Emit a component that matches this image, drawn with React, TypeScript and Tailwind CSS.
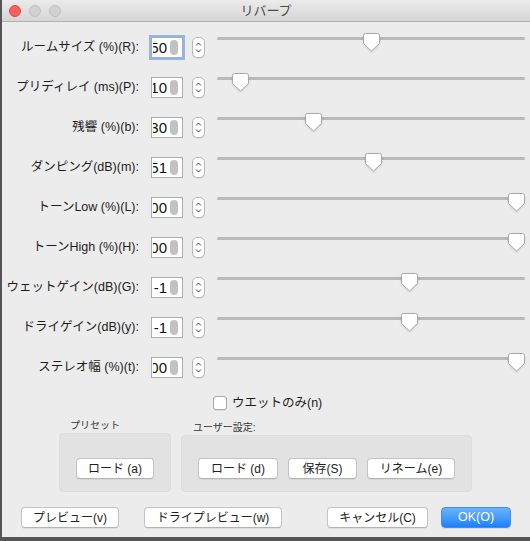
import React from "react";

const FONT = { fontFamily: '"Liberation Sans", "Noto Sans CJK JP", sans-serif' };

type Row = { label: string; value: string; thumb: number; focus?: boolean };

const rows: Row[] = [
  { label: "ルームサイズ (%)(R):", value: "50", thumb: 371, focus: true },
  { label: "プリディレイ (ms)(P):", value: "10", thumb: 240 },
  { label: "残響 (%)(b):", value: "30", thumb: 313 },
  { label: "ダンピング(dB)(m):", value: "51", thumb: 373 },
  { label: "トーンLow (%)(L):", value: "100", thumb: 516 },
  { label: "トーンHigh (%)(H):", value: "100", thumb: 516 },
  { label: "ウェットゲイン(dB)(G):", value: "-1", thumb: 409 },
  { label: "ドライゲイン(dB)(y):", value: "-1", thumb: 409 },
  { label: "ステレオ幅 (%)(t):", value: "100", thumb: 516 },
];

function Stepper() {
  return (
    <div className="w-[13px] h-[21px] bg-white border border-[#b8b8b8] rounded-[5px] shadow-[0_1px_0_rgba(0,0,0,0.06)] flex items-center justify-center">
      <svg width="11" height="19" viewBox="0 0 11 19">
        <path d="M3 7.5 L5.5 5 L8 7.5" fill="none" stroke="#4a4a4a" strokeWidth="1" />
        <path d="M3 11.5 L5.5 14 L8 11.5" fill="none" stroke="#4a4a4a" strokeWidth="1" />
      </svg>
    </div>
  );
}

function Thumb() {
  return (
    <svg width="17" height="19" viewBox="0 0 17 19" className="drop-shadow-[0_1px_1px_rgba(0,0,0,0.12)]">
      <path
        d="M2.5 0.5 H14.5 A2 2 0 0 1 16.5 2.5 V10.5 L8.5 18 L0.5 10.5 V2.5 A2 2 0 0 1 2.5 0.5 Z"
        fill="#ffffff"
        stroke="#a8a8a8"
      />
    </svg>
  );
}

function SliderRow({ row }: { row: Row }) {
  return (
    <div className="h-[40px] flex items-center">
      <div className="w-[137px] text-right text-[12.5px] text-[#1c1c1c] whitespace-nowrap">{row.label}</div>
      <div
        className={
          "ml-[12px] w-[32px] h-[21px] bg-white border border-[#aeaeae] flex items-center pl-[1px] " +
          (row.focus ? "shadow-[0_0_0_2px_#8fb6ee]" : "")
        }
      >
        <div className="w-[14px] overflow-hidden flex justify-end">
          <span className="text-[15px] leading-none text-[#111] whitespace-nowrap" style={FONT}>
            {row.value}
          </span>
        </div>
        <div className="ml-[3px] w-[8px] h-[15px] rounded-full bg-[#c2c2c2]" />
      </div>
      <div className="ml-[9px]">
        <Stepper />
      </div>
      <div className="ml-[12px] w-[309px] h-full relative">
        <div className="absolute left-0 right-[1px] top-[10px] h-[3px] rounded-full bg-[#b9b9b9]" />
        <div className="absolute top-[6px]" style={{ left: row.thumb - 8.5 - 217 }}>
          <Thumb />
        </div>
      </div>
    </div>
  );
}

function Btn({ children, w, primary }: { children: React.ReactNode; w: string; primary?: boolean }) {
  if (primary) {
    return (
      <div
        className={
          w +
          " h-[21px] rounded-[4px] border border-[#3f8ef2] bg-gradient-to-b from-[#6cb4fb] to-[#1680fb] text-white text-[12.5px] flex items-center justify-center shadow-[0_1px_0_rgba(0,0,0,0.08)]"
        }
      >
        {children}
      </div>
    );
  }
  return (
    <div
      className={
        w +
        " h-[21px] rounded-[4px] border border-[#c4c4c4] border-b-[#b3b3b3] bg-white text-[#222] text-[12px] flex items-center justify-center shadow-[0_1px_0_rgba(0,0,0,0.05)] whitespace-nowrap"
      }
    >
      {children}
    </div>
  );
}

export default function App() {
  return (
    <div className="w-[530px] h-[541px] bg-[#555555] overflow-hidden" style={FONT}>
      <div className="ml-[2px] w-[528px] h-[537px] bg-[#ececec] flex flex-col">
        {/* title bar */}
        <div className="h-[22px] shrink-0 grid grid-cols-[1fr_auto_1fr] items-center bg-gradient-to-b from-[#ebebeb] to-[#d6d6d6] border-b border-[#b0b0b0]">
          <div className="flex items-center gap-[8px] pl-[7px]">
            <div className="w-[12px] h-[12px] rounded-full bg-[#fc605b] border border-[#de4b46]" />
            <div className="w-[12px] h-[12px] rounded-full bg-[#d1d1d1] border border-[#c0c0c0]" />
            <div className="w-[12px] h-[12px] rounded-full bg-[#d1d1d1] border border-[#c0c0c0]" />
          </div>
          <div className="text-[13px] text-[#4a4a4a] leading-none">リバープ</div>
          <div />
        </div>

        {/* slider rows */}
        <div className="pt-[5px] flex flex-col">
          {rows.map((r) => (
            <SliderRow key={r.label} row={r} />
          ))}
        </div>

        {/* checkbox */}
        <div className="mt-[9px] h-[14px] flex items-center pl-[211px]">
          <div className="w-[14px] h-[14px] bg-white border border-[#a9a9a9] rounded-[3px] shadow-[0_1px_0_rgba(0,0,0,0.05)]" />
          <span className="ml-[5px] text-[12.5px] text-[#1c1c1c] whitespace-nowrap">ウエットのみ(n)</span>
        </div>

        {/* groups */}
        <div className="mt-[9px] flex items-end pl-[57px] gap-[10px]">
          <div className="w-[112px] flex flex-col">
            <div className="h-[14px] pl-[11px] text-[10px] leading-[14px] text-[#333] whitespace-nowrap">プリセット</div>
            <div className="h-[59px] rounded-[4px] bg-[#e2e2e2] border border-[#dddddd] flex justify-center pt-[24px]">
              <Btn w="w-[78px]">ロード (a)</Btn>
            </div>
          </div>
          <div className="w-[291px] flex flex-col">
            <div className="h-[14px] pl-[12px] text-[10px] leading-[14px] text-[#333] whitespace-nowrap">ユーザー設定:</div>
            <div className="h-[57px] rounded-[4px] bg-[#e2e2e2] border border-[#dddddd] flex pt-[22px] pl-[16px] gap-[10px]">
              <Btn w="w-[80px]">ロード (d)</Btn>
              <Btn w="w-[69px]">保存(S)</Btn>
              <Btn w="w-[88px]">リネーム(e)</Btn>
            </div>
          </div>
        </div>

        {/* bottom buttons */}
        <div className="mt-[15px] flex pl-[19px]">
          <Btn w="w-[98px]">プレビュー(v)</Btn>
          <div className="ml-[25px]">
            <Btn w="w-[138px]">ドライプレビュー(w)</Btn>
          </div>
          <div className="ml-[45px]">
            <Btn w="w-[101px]">キャンセル(C)</Btn>
          </div>
          <div className="ml-[13px]">
            <Btn w="w-[70px]" primary>
              OK(O)
            </Btn>
          </div>
        </div>
      </div>
    </div>
  );
}
